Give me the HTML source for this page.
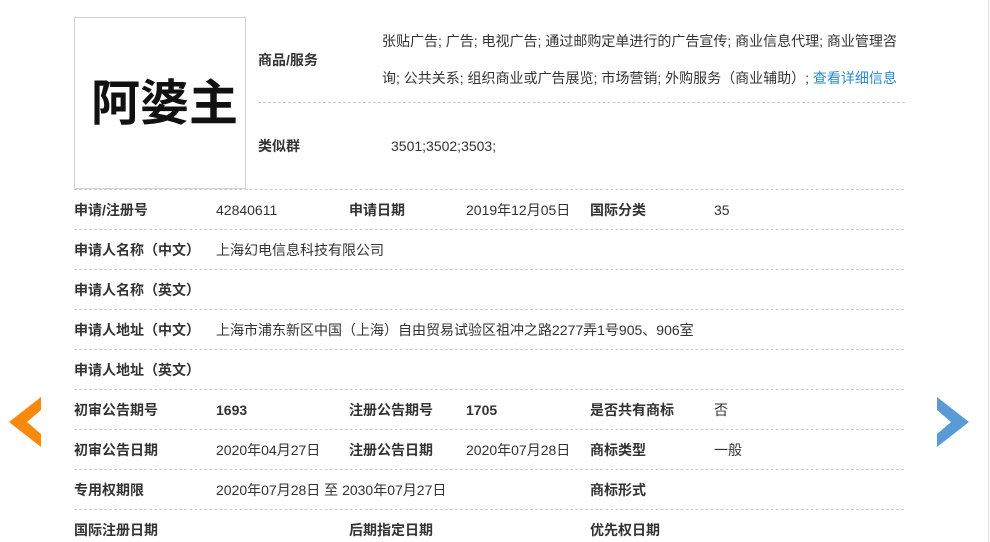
<!DOCTYPE html>
<html><head><meta charset="utf-8"><style>
body{margin:0;width:990px;height:542px;background:#fff;position:relative;overflow:hidden;font-family:"Liberation Sans","Noto Sans CJK SC",sans-serif;font-size:14px;color:#333}
.a{position:absolute;white-space:nowrap;line-height:20px}
.b{font-weight:bold}
.l{position:absolute;left:74px;width:830px;border-top:1px dashed #ccc;height:0}
</style></head><body>
<div style="position:absolute;left:74px;top:17px;width:170px;height:170px;border:1px solid #d4d4d4"></div>
<div class="a" style="left:91px;top:78px;font-size:49px;line-height:52px;font-weight:bold;color:#111">阿婆主</div>
<div class="a b" style="left:258px;top:50px">商品/服务</div>
<div class="a" style="left:382px;top:31px">张贴广告; 广告; 电视广告; 通过邮购定单进行的广告宣传; 商业信息代理; 商业管理咨</div>
<div class="a" style="left:382px;top:68px">询; 公共关系; 组织商业或广告展览; 市场营销; 外购服务（商业辅助）; <span style="color:#2a8bd2">查看详细信息</span></div>
<div class="l" style="left:258px;width:647px;top:102px"></div>
<div class="a b" style="left:258px;top:136px">类似群</div>
<div class="a" style="left:391px;top:136px">3501;3502;3503;</div>
<div class="l" style="top:189px"></div>

<div class="a b" style="left:74px;top:200px">申请/注册号</div>
<div class="a" style="left:216px;top:200px">42840611</div>
<div class="a b" style="left:349px;top:200px">申请日期</div>
<div class="a" style="left:466px;top:200px">2019年12月05日</div>
<div class="a b" style="left:590px;top:200px">国际分类</div>
<div class="a" style="left:714px;top:200px">35</div>
<div class="l" style="top:229px"></div>

<div class="a b" style="left:74px;top:240px">申请人名称（中文）</div>
<div class="a" style="left:216px;top:240px">上海幻电信息科技有限公司</div>
<div class="l" style="top:269px"></div>
<div class="a b" style="left:74px;top:280px">申请人名称（英文）</div>
<div class="l" style="top:309px"></div>
<div class="a b" style="left:74px;top:320px">申请人地址（中文）</div>
<div class="a" style="left:216px;top:320px">上海市浦东新区中国（上海）自由贸易试验区祖冲之路2277弄1号905、906室</div>
<div class="l" style="top:349px"></div>
<div class="a b" style="left:74px;top:360px">申请人地址（英文）</div>
<div class="l" style="top:389px"></div>

<div class="a b" style="left:74px;top:400px">初审公告期号</div>
<div class="a b" style="left:216px;top:400px">1693</div>
<div class="a b" style="left:349px;top:400px">注册公告期号</div>
<div class="a b" style="left:466px;top:400px">1705</div>
<div class="a b" style="left:590px;top:400px">是否共有商标</div>
<div class="a" style="left:714px;top:400px">否</div>
<div class="l" style="top:429px"></div>

<div class="a b" style="left:74px;top:440px">初审公告日期</div>
<div class="a" style="left:216px;top:440px">2020年04月27日</div>
<div class="a b" style="left:349px;top:440px">注册公告日期</div>
<div class="a" style="left:466px;top:440px">2020年07月28日</div>
<div class="a b" style="left:590px;top:440px">商标类型</div>
<div class="a" style="left:714px;top:440px">一般</div>
<div class="l" style="top:469px"></div>

<div class="a b" style="left:74px;top:480px">专用权期限</div>
<div class="a" style="left:216px;top:480px">2020年07月28日 至 2030年07月27日</div>
<div class="a b" style="left:590px;top:480px">商标形式</div>
<div class="l" style="top:509px"></div>

<div class="a b" style="left:74px;top:520px">国际注册日期</div>
<div class="a b" style="left:349px;top:520px">后期指定日期</div>
<div class="a b" style="left:590px;top:520px">优先权日期</div>

<svg style="position:absolute;left:9px;top:397px" width="33" height="50"><polygon points="32,0 0,25 32,50 32,37 18,25 32,13" fill="#f7890c"/></svg>
<svg style="position:absolute;left:936px;top:397px" width="33" height="50"><polygon points="1,0 33,25 1,50 1,37 15,25 1,13" fill="#5b9bd5"/></svg>
<div style="position:absolute;left:988px;top:0;width:1px;height:542px;background:#ddd"></div>
</body></html>
